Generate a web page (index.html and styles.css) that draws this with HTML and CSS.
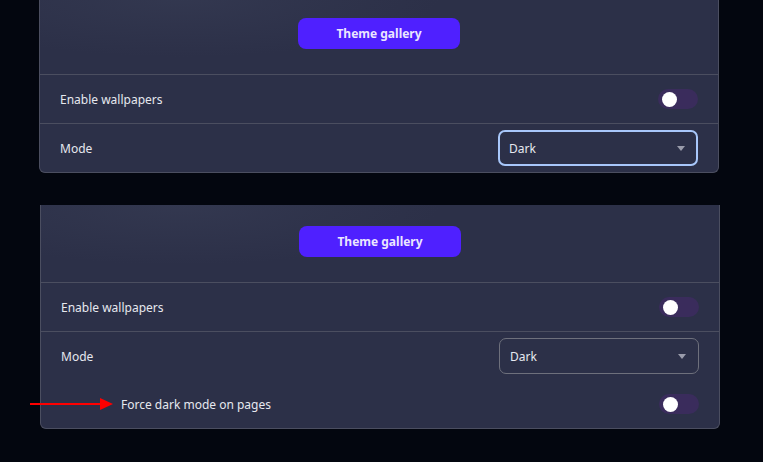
FILE: index.html
```html
<!DOCTYPE html>
<html>
<head>
  <meta charset="UTF-8">
  <title>Theme settings</title>
  <link rel="stylesheet" href="styles.css">
</head>
<body>
  <div class="panel panel-first">
    <div class="gallery">
      <button type="button" class="gallery-btn">Theme gallery</button>
    </div>
    <div class="row">
      <span class="label">Enable wallpapers</span>
      <span class="toggle"><span class="knob"></span></span>
    </div>
    <div class="row">
      <span class="label">Mode</span>
      <div class="select focused">
        <span>Dark</span>
        <span class="caret"></span>
      </div>
    </div>
  </div>

  <div class="panel panel-second">
    <div class="gallery">
      <button type="button" class="gallery-btn">Theme gallery</button>
    </div>
    <div class="row">
      <span class="label">Enable wallpapers</span>
      <span class="toggle"><span class="knob"></span></span>
    </div>
    <div class="row">
      <span class="label">Mode</span>
      <div class="select">
        <span>Dark</span>
        <span class="caret"></span>
      </div>
    </div>
    <div class="row sub-row">
      <span class="label sub-label">Force dark mode on pages</span>
      <span class="toggle"><span class="knob"></span></span>
      <!-- annotation arrow -->
      <svg class="arrow" width="84" height="14" viewBox="0 0 84 14">
        <line x1="0" y1="7" x2="72" y2="7" stroke="#ff0000" stroke-width="2"/>
        <polygon points="70,1 83,7 70,13" fill="#ff0000"/>
      </svg>
    </div>
  </div>
</body>
</html>
```

FILE: styles.css
```css
body {
  margin: 0;
  background: #03060f;
  font-family: "Noto Sans", "Open Sans", sans-serif;
  font-size: 12px;
  color: #e6e8ef;
  height: 462px;
  overflow: hidden;
}
.panel {
  width: 678px;
  border: 1px solid #4b4e60;
  border-top: none;
  border-radius: 0 0 6px 6px;
  background:
    radial-gradient(ellipse 260px 60px at 140px 0, rgba(64, 70, 94, 0.35), transparent 100%),
    #2c3048;
}
.panel-first {
  margin: -3px 0 0 39px;
}
.panel-second {
  margin: 32px 0 0 40px;
}
.gallery {
  display: flex;
  justify-content: center;
  padding: 21px 0 25px;
}
.gallery-btn {
  width: 162px;
  height: 31px;
  border: none;
  border-radius: 8px;
  background: #4f20ff;
  color: #ebe6ff;
  font-family: inherit;
  font-size: 12px;
  font-weight: bold;
  cursor: pointer;
}
.row {
  position: relative;
  display: flex;
  align-items: center;
  justify-content: space-between;
  height: 48px;
  padding: 0 20px;
  border-top: 1px solid #4b4e60;
}
.sub-row {
  border-top: none;
}
.sub-label {
  margin-left: 60px;
}
.toggle {
  display: flex;
  align-items: center;
  width: 40px;
  height: 20px;
  border-radius: 10px;
  background: #3a2c5c;
}
.knob {
  width: 15px;
  height: 15px;
  margin-left: 4px;
  border-radius: 50%;
  background: #fff;
}
.select {
  display: flex;
  align-items: center;
  justify-content: space-between;
  box-sizing: border-box;
  width: 200px;
  height: 36px;
  padding: 0 12px 0 10px;
  border: 1px solid #6e707c;
  border-radius: 7px;
  font-size: 12px;
}
.select.focused {
  border: 2px solid #a8c7fa;
  padding: 0 11px 0 9px;
}
.caret {
  width: 0;
  height: 0;
  border-left: 4px solid transparent;
  border-right: 4px solid transparent;
  border-top: 5px solid #9a9cab;
}
.arrow {
  position: absolute;
  left: -11px;
  top: 17px;
}
```
